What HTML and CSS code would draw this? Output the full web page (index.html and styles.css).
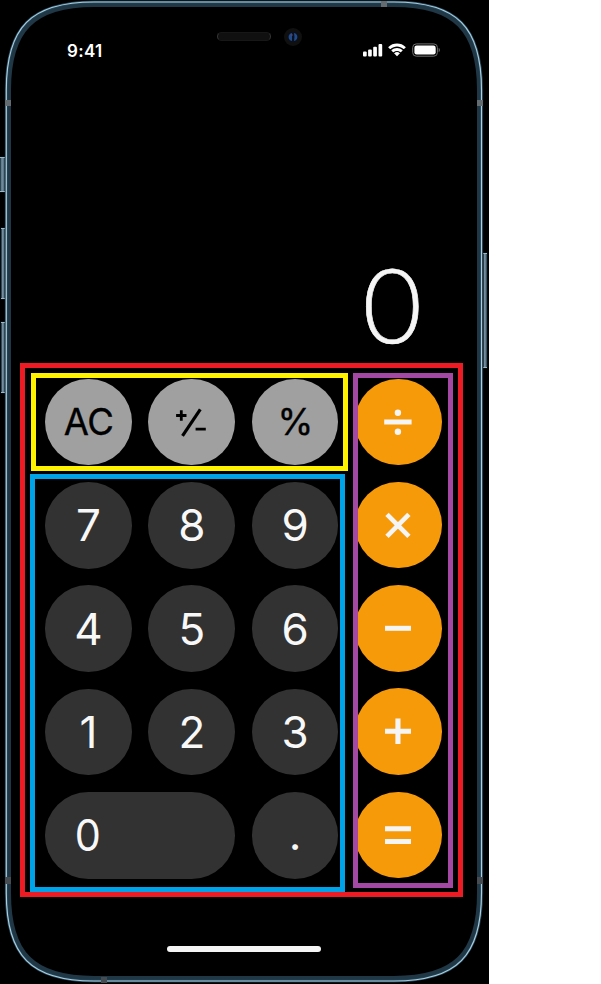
FILE: index.html
```html
<!DOCTYPE html>
<html lang="en">
<head>
<meta charset="utf-8">
<title>Calculator</title>
<link rel="stylesheet" href="styles.css">
</head>
<body>
<main class="phone">
  <svg class="frame" viewBox="0 0 489 984" aria-hidden="true">
    <defs>
      <linearGradient id="key" x1="0" x2="1" y1="0" y2="0"><stop offset="0" stop-color="#263d4a"/><stop offset=".4" stop-color="#7893a4"/><stop offset="1" stop-color="#425b6a"/></linearGradient>
      <path id="body" d="M94 4.500H394C455 4.500 479.500 30 479.500 90V893C479.500 954 455 978.500 394 978.500H94C33 978.500 8.500 954 8.500 893V90C8.500 30 33 4.500 94 4.500Z"/>
      <path id="rim" d="M94 2H394C457 2 481.500 27 481.500 90V893C481.500 956 457 981 394 981H94C31 981 6.300 956 6.300 893V90C6.300 27 31 2 94 2Z"/>
    </defs>
    <g fill="url(#key)" stroke="#0f2835" stroke-width=".6">
      <rect x="0" y="157" width="5" height="35"/>
      <rect x="1" y="228" width="4" height="71"/>
      <rect x="1" y="322" width="4" height="71"/>
      <rect x="483" y="253" width="4" height="115"/>
    </g>
    <path d="M0 157.500h5M0 191.500h5M1 228.500h4M1 298.500h4M1 322.500h4M1 392.500h4M483 253.500h4M483 367.500h4" stroke="#9db8c6"/>
    <use href="#body" fill="none" stroke="#1b1b1b" stroke-width="7.500"/>
    <use href="#body" fill="#000" stroke="#203746" stroke-width="5"/>
    <use href="#rim" fill="none" stroke="#27485b" stroke-width="2.400"/>
    <use href="#rim" fill="none" stroke="#a9cfe0" stroke-width="1.150"/>
    <path d="M5 100h6v6H5zM477 100h6v6h-6zM381 1h6v6h-6z" fill="#626c71"/>
    <path d="M5 877h6v7H5zM477 877h6v7h-6zM101 977h6v6h-6z" fill="#454d52"/>
  </svg>

  <header class="status">
    <time class="clock">9:41</time>
    <div class="sensors">
      <span class="speaker"></span>
      <svg class="camera" viewBox="0 0 18 18"><circle cx="9" cy="9" r="9" fill="#101010"/><circle cx="9" cy="9" r="5" fill="#081023"/><path d="M8 5C3.500 5.500 3.500 12.500 8 13ZM10 5C14.500 5.500 14.500 12.500 10 13L10.500 9Z" fill="#214a86"/><circle cx="8" cy="7" r=".8" fill="#743f5f"/><circle cx="9" cy="10.500" r="1" fill="#081329"/></svg>
    </div>
    <div class="indicators">
      <svg class="signal" viewBox="0 0 20 14" fill="#fff"><rect x="0" y="8.600" width="3.700" height="5" rx="1"/><rect x="5.100" y="6.500" width="3.700" height="7.100" rx="1"/><rect x="10.200" y="3.700" width="3.700" height="9.900" rx="1"/><rect x="15.500" y=".9" width="3.700" height="12.700" rx="1"/></svg>
      <svg class="wifi" viewBox="0 0 18 14" fill="#fff"><path d="M9 .5C5.800.5 2.700 1.700.4 3.900l-.1.500L2 6.100h.5c3.700-3.400 9.300-3.400 13 0h.5l1.700-1.700-.1-.5A12.500 12.500 0 0 0 9 .5Z"/><path d="M9 4.900c-2.100 0-4 .8-5.500 2.100l-.1.500 1.700 1.700h.5c1.900-1.700 4.900-1.700 6.800 0h.5l1.700-1.700-.1-.5A8.100 8.100 0 0 0 9 4.900Z"/><path d="M9 9.100c-1 0-2 .4-2.700 1.100v.4l2.400 2.500q.3.300.6 0l2.400-2.500v-.4A4 4 0 0 0 9 9.100Z"/></svg>
      <svg class="battery" viewBox="0 0 28 14"><rect x=".7" y=".9" width="24.700" height="12.300" rx="3.600" fill="none" stroke="#707070"/><rect x="2.400" y="2.600" width="21.300" height="8.900" rx="2.200" fill="#fff"/><path d="M26.700 5v4.200c1.500-.6 1.500-3.600 0-4.200Z" fill="#707070"/></svg>
    </div>
  </header>

  <output class="display"><span class="value">0</span></output>

  <section class="keypad">
    <div class="left">
      <div class="functions">
        <button class="key light">AC</button>
        <button class="key light" aria-label="Plus or minus"><svg class="glyph" viewBox="0 0 86.700 86.700" fill="none" stroke="#000"><path d="M28.100 36.500h10.400M33.300 31.300v10.400M47.600 50.200h10.200" stroke-width="2.800"/><path d="M52.300 30.300 34.500 56.900" stroke-width="3.200"/></svg></button>
        <button class="key light">%</button>
      </div>
      <div class="digits">
        <button class="key">7</button><button class="key">8</button><button class="key">9</button>
        <button class="key">4</button><button class="key">5</button><button class="key">6</button>
        <button class="key">1</button><button class="key">2</button><button class="key">3</button>
        <button class="key zero"><span class="narrow">0</span></button><button class="key point">.</button>
      </div>
    </div>
    <div class="operators">
      <button class="key orange" aria-label="Divide"><svg class="glyph" viewBox="0 0 86.700 86.700" fill="#f5f5f5"><path d="M29.200 40.500h27.400v5H29.200z"/><circle cx="42.900" cy="33.800" r="3.200"/><circle cx="42.900" cy="52.700" r="3.200"/></svg></button>
      <button class="key orange" aria-label="Multiply"><svg class="glyph" viewBox="0 0 86.700 86.700" stroke="#f5f5f5" stroke-width="4.700"><path d="m32 32.400 21.900 21.900m0-21.900L32 54.300"/></svg></button>
      <button class="key orange" aria-label="Subtract"><svg class="glyph" viewBox="0 0 86.700 86.700" fill="#f5f5f5"><path d="M30 40.800h26v5H30z"/></svg></button>
      <button class="key orange" aria-label="Add"><svg class="glyph" viewBox="0 0 86.700 86.700" fill="#f5f5f5"><path d="M30 40.800h26v5H30zM40.400 30.600h5.100v25.500h-5.100z"/></svg></button>
      <button class="key orange" aria-label="Equals"><svg class="glyph" viewBox="0 0 86.700 86.700" fill="#f5f5f5"><path d="M30 34.300h26v5H30zM30 47.100h26v5H30z"/></svg></button>
    </div>
  </section>
  <div class="home"></div>
</main>
</body>
</html>
```
FILE: styles.css
```css
* { box-sizing: border-box; }

body {
  margin: 0;
  background: #fff;
  font-family: Inter, "Liberation Sans", sans-serif;
}

.phone {
  position: relative;
  isolation: isolate;
  width: 489px;
  height: 984px;
  background: #000;
  overflow: hidden;
}

.frame {
  position: absolute;
  inset: 0;
  z-index: -1;
  width: 489px;
  height: 984px;
}

svg { display: block; }

.status {
  display: grid;
  grid-template-columns: 150px 146px 144px;
  height: 90px;
  padding: 27px 0 0 67px;
}

.clock {
  padding-top: 14px;
  color: #fff;
  font-size: 17px;
  font-weight: 600;
  letter-spacing: .3px;
  line-height: 21px;
}

.sensors {
  display: flex;
  align-items: flex-start;
  gap: 12.500px;
}

.speaker {
  width: 54px;
  height: 9px;
  margin-top: 5px;
  border: 1px solid #171717;
  border-right-color: #363636;
  border-left-color: #363636;
  border-radius: 5px;
  background: radial-gradient(circle, #1b1b1b 35%, #101010 40%) 0 0 / 2px 2px;
}

.camera { width: 18px; height: 18px; margin-top: .5px; }

.indicators {
  display: flex;
  gap: 5px;
  padding-top: 16px;
}

.signal { width: 20px; height: 14px; }
.wifi { width: 18px; height: 14px; }
.battery { width: 28px; height: 14px; margin-left: 1px; }

.display {
  display: block;
  height: 273px;
  padding: 155px 64px 0 0;
  color: #f5f5f5;
  font-size: 101px;
  font-weight: 200;
  line-height: 122px;
  text-align: right;
}

.value {
  display: inline-block;
  transform: scaleX(1.1);
  transform-origin: 88% 50%;
  -webkit-text-stroke: .6px #f5f5f5;
}

.keypad {
  display: flex;
  gap: 5px;
  width: 443px;
  height: 534px;
  margin-left: 20px;
  padding: 5px 0 0 6px;
  border: 5px solid #ed1c24;
}

.left { width: 317px; }

.functions {
  display: flex;
  gap: 16.600px;
  height: 98px;
  padding: .5px 0 0 9.200px;
  border: 5px solid #fff200;
}

.digits {
  display: grid;
  grid-template-columns: repeat(3, 86.700px);
  grid-auto-rows: 86.700px;
  gap: 16.600px;
  width: 315px;
  height: 418px;
  margin: 3px 0 0 -1px;
  padding: 3px 0 0 10.200px;
  border: 5px solid #00a2e8;
}

.operators {
  display: flex;
  flex-direction: column;
  gap: 16.600px;
  width: 100px;
  height: 515px;
  padding-top: .5px;
  border: 5px solid #a349a4;
  overflow: hidden;
}

.key {
  display: flex;
  flex: none;
  align-items: center;
  justify-content: center;
  width: 86.700px;
  height: 86.700px;
  padding: 0;
  border: 0;
  border-radius: 43.350px;
  background: #323232;
  color: #f8f8f8;
  font: 400 44px/54px Inter, "Liberation Sans", sans-serif;
}

.light {
  background: #a0a0a0;
  color: #000;
  font-size: 36.500px;
  letter-spacing: -.5px;
  -webkit-text-stroke: .35px #000;
}

.orange { margin-left: -2.900px; background: #f79a0a; }

.glyph { width: 86.700px; height: 86.700px; }

.zero {
  grid-column: span 2;
  justify-content: flex-start;
  width: 190px;
  padding-left: 29px;
}

.narrow { transform: scaleX(.94); }

.point { padding-bottom: 2px; }

.home {
  width: 154px;
  height: 6px;
  margin: 49px 0 0 167px;
  border-radius: 3px;
  background: #f5f5f5;
}
```
